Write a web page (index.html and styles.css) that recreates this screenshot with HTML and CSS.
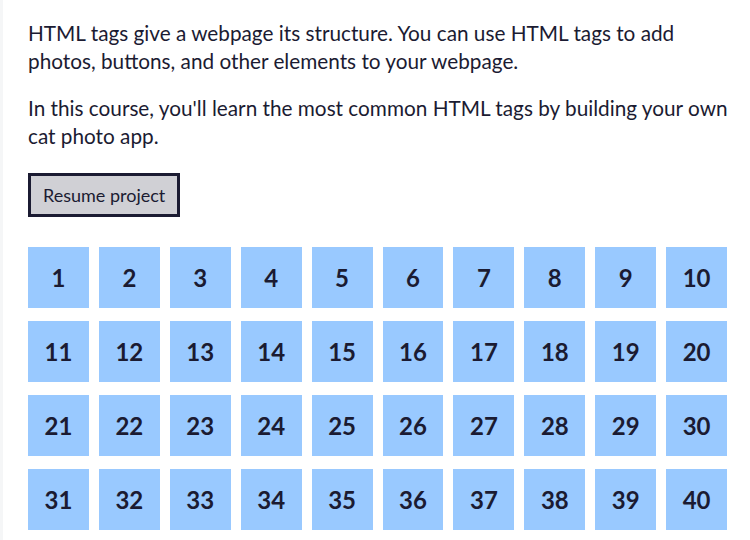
FILE: index.html
```html
<!DOCTYPE html>
<html lang="en">
<head>
<meta charset="utf-8">
<title>Cat photo app course</title>
<link rel="stylesheet" href="styles.css">
</head>
<body>
<main class="panel">
  <p class="intro">HTML tags give a webpage its structure. You can use HTML tags to add photos, buttons, and other elements to your webpage.</p>
  <p class="intro">In this course, you'll learn the most common HTML tags by building your own cat photo app.</p>
  <button class="resume" type="button">Resume project</button>
  <div class="block-grid">
    <a class="step">1</a><a class="step">2</a><a class="step">3</a><a class="step">4</a><a class="step">5</a>
    <a class="step">6</a><a class="step">7</a><a class="step">8</a><a class="step">9</a><a class="step">10</a>
    <a class="step">11</a><a class="step">12</a><a class="step">13</a><a class="step">14</a><a class="step">15</a>
    <a class="step">16</a><a class="step">17</a><a class="step">18</a><a class="step">19</a><a class="step">20</a>
    <a class="step">21</a><a class="step">22</a><a class="step">23</a><a class="step">24</a><a class="step">25</a>
    <a class="step">26</a><a class="step">27</a><a class="step">28</a><a class="step">29</a><a class="step">30</a>
    <a class="step">31</a><a class="step">32</a><a class="step">33</a><a class="step">34</a><a class="step">35</a>
    <a class="step">36</a><a class="step">37</a><a class="step">38</a><a class="step">39</a><a class="step">40</a>
  </div>
</main>
</body>
</html>
```

FILE: styles.css
```css
html, body {
  margin: 0;
  padding: 0;
}

body {
  background: #f5f6f7;
  color: #1b1b32;
  font-family: Lato, "Liberation Sans", sans-serif;
  overflow: hidden;
}

.panel {
  margin-left: 3px;
  background: #ffffff;
  padding: 19px 20px 9px 25px;
  min-height: 540px;
  box-sizing: border-box;
}

.intro {
  margin: 0 0 19px;
  font-size: 20.75px;
  line-height: 28px;
}

.resume {
  display: block;
  margin-top: 23px;
  height: 44px;
  padding: 0 12px;
  background: #d0d0d5;
  border: 3px solid #1b1b32;
  color: #1b1b32;
  font-family: Lato, "Liberation Sans", sans-serif;
  font-size: 18px;
  cursor: pointer;
}

.block-grid {
  margin-top: 30px;
  margin-right: 3px;
  display: grid;
  grid-template-columns: repeat(10, 1fr);
  column-gap: 10px;
  row-gap: 13px;
}

.step {
  aspect-ratio: 1 / 1;
  display: flex;
  align-items: center;
  justify-content: center;
  background: #99c9ff;
  color: #1b1b32;
  font-family: Lato, "Liberation Sans", sans-serif;
  font-size: 24px;
  font-weight: bold;
}
```
